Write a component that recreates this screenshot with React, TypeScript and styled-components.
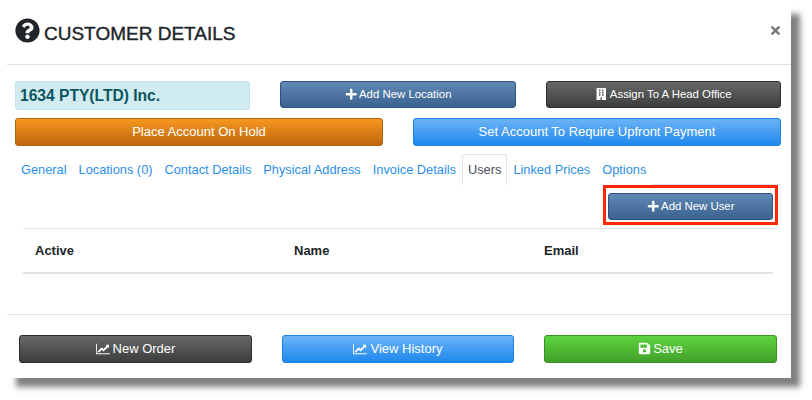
import { createGlobalStyle, styled } from "styled-components";
import { FaBuilding, FaPlus, FaQuestionCircle, FaSave, FaTimes } from "react-icons/fa";

const GlobalStyle = createGlobalStyle`
  * {
    box-sizing: border-box;
  }
  html,
  body {
    height: 100%;
  }
  body {
    margin: 0;
    background: #fff;
    font-family: "Liberation Sans", Arial, sans-serif;
    color: #212529;
  }
`;

const Page = styled.div`
  width: 812px;
  height: 400px;
  padding: 5px 0 0 7px;
  overflow: hidden;
`;

const Modal = styled.div`
  width: 784px;
  height: 373px;
  background: #fff;
  box-shadow: 9px 9px 6px rgba(0, 0, 0, 0.5);
  display: flex;
  flex-direction: column;
`;

const Header = styled.div`
  height: 60px;
  flex: none;
  padding: 13px 10px 0 8px;
  border-bottom: 1px solid #dee2e6;
  display: flex;
  align-items: flex-start;
  justify-content: space-between;
`;

const Title = styled.h4`
  margin: 0;
  display: flex;
  align-items: flex-start;
  gap: 4px;
  font-size: 19px;
  font-weight: 400;
  line-height: 25px;
  svg {
    font-size: 25px;
  }
`;

const TitleText = styled.span`
  margin-top: 3px;
  -webkit-text-stroke: 0.4px #212529;
`;

const Close = styled.span`
  margin: 6px -1px 0 0;
  color: #777;
  font-size: 13px;
  line-height: 13px;
`;

const Body = styled.div`
  flex: 1;
  padding: 16px 10px 0 8px;
`;

const TopRow = styled.div`
  display: grid;
  grid-template-columns: 235px 236px 235px;
  gap: 30px;
  align-items: start;
`;

const HoldRow = styled.div`
  display: grid;
  grid-template-columns: 368px 368px;
  gap: 30px;
  margin-top: 8px;
`;

const CompanyName = styled.div`
  height: 29px;
  padding: 0 4px;
  background: #d1ecf1;
  border: 1px solid #bee5eb;
  border-radius: 3px;
  color: #0c5460;
  font-size: 15.6px;
  font-weight: 700;
  line-height: 28px;
`;

const palette = {
  navy: { top: "#6189b5", bottom: "#3b6290", border: "#2f5280" },
  dark: { top: "#666968", bottom: "#3c3e3d", border: "#2c2d2d" },
  orange: { top: "#f7981f", bottom: "#bd660f", border: "#b3620f" },
  blue: { top: "#6cb3f6", bottom: "#1e88ee", border: "#1a82e6" },
  green: { top: "#5dd440", bottom: "#41a029", border: "#3a8f27" },
};

const Button = styled.button<{ $tone: keyof typeof palette; $size?: "sm" | "md" }>`
  display: flex;
  align-items: center;
  justify-content: center;
  gap: 2px;
  width: 100%;
  height: ${(props) => (props.$size === "sm" ? "27px" : "28px")};
  padding: 0 0 1px;
  color: #fff;
  font-family: inherit;
  font-size: ${(props) => (props.$size === "sm" ? "11.4px" : "13px")};
  background: linear-gradient(
    ${(props) => palette[props.$tone].top},
    ${(props) => palette[props.$tone].bottom}
  );
  border: 1px solid ${(props) => palette[props.$tone].border};
  border-radius: 3px;
  svg {
    font-size: ${(props) => (props.$size === "sm" ? "12.5px" : "13px")};
  }
`;

const ChartIcon = styled.svg`
  width: 14px;
  height: 12px;
  margin-right: 1px;
  fill: currentColor;
`;

const Tabs = styled.div`
  display: flex;
  height: 31px;
  margin-top: 8px;
  border-bottom: 1px solid #dee2e6;
`;

const Tab = styled.div<{ $active?: boolean }>`
  height: 31px;
  padding: 7px 5px 0;
  font-size: 12.8px;
  line-height: 16px;
  color: ${(props) => (props.$active ? "#495057" : "#2c8fe8")};
  background: #fff;
  border: 1px solid ${(props) => (props.$active ? "#dee2e6" : "transparent")};
  border-bottom: 1px solid ${(props) => (props.$active ? "#fff" : "transparent")};
  border-radius: 3px 3px 0 0;
`;

const UserAction = styled.div`
  display: flex;
  justify-content: flex-end;
  margin-right: 3px;
`;

const Highlight = styled.div`
  width: 175px;
  height: 40px;
  padding: 5px 2px 2px;
  border: 3px solid #ff2600;
`;

const Table = styled.div`
  display: grid;
  grid-template-columns: 259px 250px 1fr;
  height: 46px;
  margin: 3px 8px 0 8px;
  padding: 0 12px;
  border-top: 1px solid #dee2e6;
  border-bottom: 2px solid #dee2e6;
  align-items: center;
`;

const HeadCell = styled.div`
  font-size: 13px;
  font-weight: 700;
`;

const Footer = styled.div`
  flex: none;
  height: 64px;
  padding: 20px 14px 0 12px;
  border-top: 1px solid #dee2e6;
  display: grid;
  grid-template-columns: 233px 232px 233px;
  gap: 30px;
  align-items: start;
`;

const LineChart = () => (
  <ChartIcon viewBox="0 0 2048 1792">
    <path d="M2048 1536v128h-2048v-1536h128v1408h1920zm-128-1248v435q0 21-19.5 29.5t-35.5-7.5l-121-121-633 633q-10 10-23 10t-23-10l-233-233-416 416-192-192 585-585q10-10 23-10t23 10l233 233 464-464-121-121q-16-16-7.5-35.5t29.5-19.5h435q14 0 23 9t9 23z" />
  </ChartIcon>
);

const App = () => {
  return (
    <Page>
      <GlobalStyle />
      <Modal>
        <Header>
          <Title>
            <FaQuestionCircle />
            <TitleText>CUSTOMER DETAILS</TitleText>
          </Title>
          <Close>
            <FaTimes />
          </Close>
        </Header>
        <Body>
          <TopRow>
            <CompanyName>1634 PTY(LTD) Inc.</CompanyName>
            <Button $tone="navy" $size="sm">
              <FaPlus />
              Add New Location
            </Button>
            <Button $tone="dark" $size="sm">
              <FaBuilding />
              Assign To A Head Office
            </Button>
          </TopRow>
          <HoldRow>
            <Button $tone="orange">Place Account On Hold</Button>
            <Button $tone="blue">Set Account To Require Upfront Payment</Button>
          </HoldRow>
          <Tabs>
            <Tab>General</Tab>
            <Tab>Locations (0)</Tab>
            <Tab>Contact Details</Tab>
            <Tab>Physical Address</Tab>
            <Tab>Invoice Details</Tab>
            <Tab $active>Users</Tab>
            <Tab>Linked Prices</Tab>
            <Tab>Options</Tab>
          </Tabs>
          <UserAction>
            <Highlight>
              <Button $tone="navy" $size="sm">
                <FaPlus />
                Add New User
              </Button>
            </Highlight>
          </UserAction>
          <Table>
            <HeadCell>Active</HeadCell>
            <HeadCell>Name</HeadCell>
            <HeadCell>Email</HeadCell>
          </Table>
        </Body>
        <Footer>
          <Button $tone="dark">
            <LineChart />
            New Order
          </Button>
          <Button $tone="blue">
            <LineChart />
            View History
          </Button>
          <Button $tone="green">
            <FaSave />
            Save
          </Button>
        </Footer>
      </Modal>
    </Page>
  );
};

export default App;
